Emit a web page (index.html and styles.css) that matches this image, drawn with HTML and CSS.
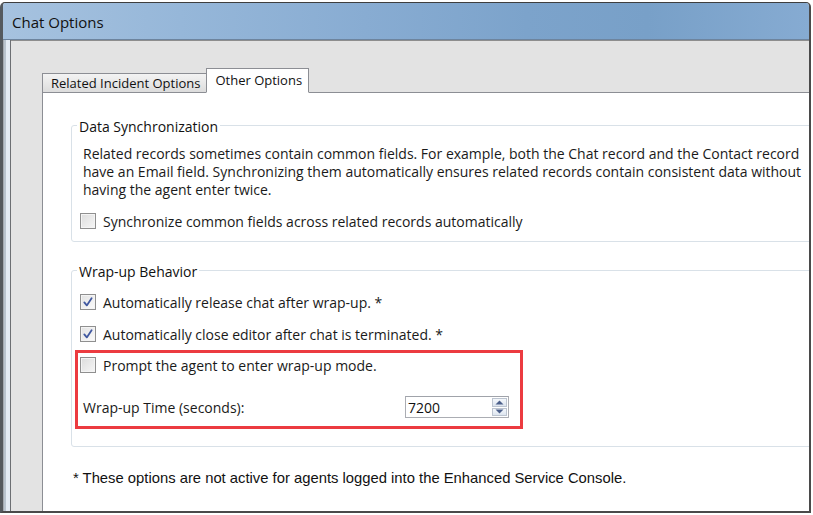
FILE: index.html
```html
<!DOCTYPE html>
<html lang="en">
<head>
<meta charset="utf-8">
<title>Chat Options</title>
<link rel="stylesheet" href="styles.css">
</head>
<body>
<div class="window">
  <div class="titlebar"><span class="title">Chat Options</span></div>
  <div class="frame">
    <div class="strip"></div>
    <div class="client">
      <div class="tabs">
        <div class="tab">Related Incident Options</div>
        <div class="tab active">Other Options</div>
      </div>
      <div class="panel">
        <fieldset class="group sync">
          <legend>Data Synchronization</legend>
          <p class="desc">Related records sometimes contain common fields. For example, both the Chat record and the Contact record<br>have an Email field. Synchronizing them automatically ensures related records contain consistent data without<br>having the agent enter twice.</p>
          <label class="check first"><span class="box"></span>Synchronize common fields across related records automatically</label>
        </fieldset>
        <fieldset class="group wrap">
          <legend>Wrap-up Behavior</legend>
          <label class="check first"><span class="box checked"><svg viewBox="0 0 16 16" width="16" height="16"><path d="M4.3 8.4 L6.8 11.4 L11.6 4.2" fill="none" stroke="#4058a0" stroke-width="1.8" stroke-linecap="round" stroke-linejoin="round"/></svg></span>Automatically release chat after wrap-up. *</label>
          <label class="check"><span class="box checked"><svg viewBox="0 0 16 16" width="16" height="16"><path d="M4.3 8.4 L6.8 11.4 L11.6 4.2" fill="none" stroke="#4058a0" stroke-width="1.8" stroke-linecap="round" stroke-linejoin="round"/></svg></span>Automatically close editor after chat is terminated. *</label>
          <div class="highlight">
            <label class="check"><span class="box"></span>Prompt the agent to enter wrap-up mode.</label>
            <div class="time-row">
              <span class="time-label">Wrap-up Time (seconds):</span>
              <div class="spin">
                <span class="value">7200</span>
                <div class="arrows">
                  <span class="arrow"><svg viewBox="0 0 9 5" width="9" height="5"><path d="M0.5 4.5 L4.5 0.5 L8.5 4.5 Z" fill="#4b5f8a"/></svg></span>
                  <span class="arrow"><svg viewBox="0 0 9 5" width="9" height="5"><path d="M0.5 0.5 L4.5 4.5 L8.5 0.5 Z" fill="#4b5f8a"/></svg></span>
                </div>
              </div>
            </div>
          </div>
        </fieldset>
        <p class="note">* These options are not active for agents logged into the Enhanced Service Console.</p>
      </div>
    </div>
  </div>
</div>
</body>
</html>
```
FILE: styles.css
```css
html, body {
  margin: 0;
  padding: 0;
  background: #ffffff;
}

body {
  font-family: "Open Sans", "Noto Sans", sans-serif;
  color: #1a1a1a;
}

.window {
  margin-top: 2px;
  width: 811px;
  height: 511px;
  box-sizing: border-box;
  border-top: 1px solid #3e3e3e;
  border-left: 3px solid #555a5f;
  border-right: 2px solid #4a4a4a;
  border-bottom: 2px solid #4a4a4a;
  border-radius: 5px 5px 0 0;
  display: flex;
  flex-direction: column;
  overflow: hidden;
  background: #e3e3e3;
}

.titlebar {
  flex: none;
  height: 37px;
  box-sizing: border-box;
  padding: 2px 0 0 9px;
  display: flex;
  align-items: center;
  background: linear-gradient(90deg, #a6c2df 0%, #96b7d9 22%, #88acd2 45%, #7ca3cb 65%, #78a0c8 80%, #86abd2 100%);
  border-bottom: 1px solid #6d849e;
}

.title {
  font-size: 15px;
  color: #111;
  line-height: 20px;
}

.frame {
  flex: 1;
  display: flex;
  min-height: 0;
}

.strip {
  flex: none;
  width: 8px;
  background: linear-gradient(90deg, #a4aab1 0, #a4aab1 1px, #b9c4cf 1px, #b9c4cf 3px, #e4ecf5 3px, #e4ecf5 7px, #6c6f73 7px, #6c6f73 8px);
}

.client {
  flex: 1;
  min-width: 0;
  background: #e3e3e3;
  border-top: 1px solid #8e8e8e;
  padding: 27px 0 0 31px;
  display: flex;
  flex-direction: column;
}

.tabs {
  flex: none;
  display: flex;
  align-items: flex-end;
  height: 25px;
  margin-bottom: -1px;
  position: relative;
  z-index: 1;
}

.tab {
  height: 20px;
  box-sizing: border-box;
  padding: 0 6px 0 8px;
  border: 1px solid #8c8e94;
  border-bottom: 1px solid #8c8e94;
  background: linear-gradient(#f3f3f3, #e8e8e8 50%, #dcdcdc);
  font-size: 13px;
  line-height: 18px;
  color: #111;
  white-space: nowrap;
}

.tab.active {
  height: 25px;
  margin-left: -1px;
  padding: 0 6px 0 8px;
  background: #ffffff;
  border-bottom-color: #ffffff;
  line-height: 22px;
}

.panel {
  flex: 1;
  min-height: 0;
  background: #ffffff;
  border-top: 1px solid #8c8e94;
  border-left: 1px solid #8c8e94;
  padding-left: 28px;
  overflow: hidden;
}

.group {
  width: 790px;
  box-sizing: border-box;
  margin: 0;
  padding: 0 0 10px 8px;
  border: 1px solid #d9e1e8;
  border-radius: 3px;
  min-width: 0;
}

.group legend {
  font-size: 14px;
  line-height: 18px;
  padding: 4px 2px 0;
  margin-left: -3px;
  color: #111;
}

.sync {
  margin-top: 21px;
}

.wrap {
  margin-top: 17px;
  padding-bottom: 17px;
}

.desc {
  margin: 9px 0 0 3px;
  font-size: 14px;
  line-height: 18px;
  white-space: nowrap;
  color: #1a1a1a;
}

.check {
  display: flex;
  align-items: center;
  gap: 7px;
  height: 20px;
  font-size: 14px;
  white-space: nowrap;
  color: #1a1a1a;
  margin-top: 12px;
}

.wrap .check.first {
  margin-top: 11px;
}

.box {
  flex: none;
  width: 16px;
  height: 16px;
  box-sizing: border-box;
  border: 1px solid #8f8f8f;
  background: linear-gradient(135deg, #dcdcdc, #f6f6f6);
  box-shadow: inset 0 0 0 1px #f4f4f4;
  display: flex;
}

.box.checked {
  background: linear-gradient(135deg, #e2e2e2, #fbfbfb);
}

.box svg {
  margin: -1px;
}

.highlight {
  width: 448px;
  box-sizing: border-box;
  margin: 6px 0 0 -5px;
  padding: 2px 11px 8px 2px;
  border: 3px solid #ec3b40;
}

.highlight .check {
  margin-top: 0;
}

.time-row {
  display: flex;
  align-items: center;
  height: 22px;
  margin-top: 21px;
}

.time-label {
  padding-left: 3px;
  font-size: 14px;
  color: #1a1a1a;
  white-space: nowrap;
}

.spin {
  margin-left: auto;
  width: 104px;
  height: 22px;
  box-sizing: border-box;
  border: 1px solid #abadb3;
  border-top-color: #a0a3aa;
  display: flex;
  align-items: center;
  background: #fff;
}

.value {
  flex: 1;
  padding-left: 2px;
  font-size: 14px;
  color: #111;
}

.arrows {
  flex: none;
  width: 15px;
  height: 18px;
  margin-right: 1px;
  display: flex;
  flex-direction: column;
  gap: 1px;
}

.arrow {
  flex: 1;
  box-sizing: border-box;
  border: 1px solid #bcc4d0;
  background: linear-gradient(#f4f7fb, #dde5ef);
  display: flex;
  align-items: center;
  justify-content: center;
}

.note {
  margin: 22px 0 0 2px;
  font-family: "Liberation Sans", Arial, sans-serif;
  font-size: 14.8px;
  line-height: 18px;
  color: #111;
  white-space: nowrap;
}
```
